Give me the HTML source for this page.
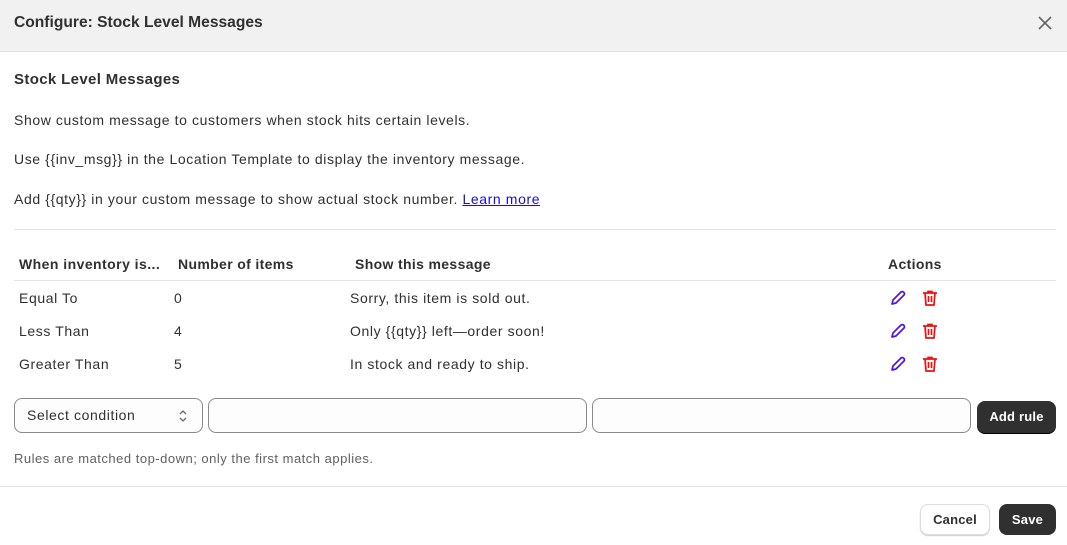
<!DOCTYPE html>
<html><head><style>
*{box-sizing:border-box;margin:0;padding:0}
body{width:1067px;height:545px;background:#fff;font-family:"Liberation Sans",sans-serif;color:#303030;position:relative;overflow:hidden;font-size:14px;letter-spacing:0.6px}
.hdr{position:absolute;left:0;top:0;width:1067px;height:52px;background:#f1f1f1;border-bottom:1px solid #e1e1e1}
.hdr h1{position:absolute;left:14px;top:14px;font-size:15.6px;font-weight:bold;color:#303030;letter-spacing:0}
.x{position:absolute;left:1037px;top:15px}
.t{position:absolute;white-space:nowrap}
.b{font-weight:bold;letter-spacing:0.35px}
.hr{position:absolute;height:1px;background:#e3e3e3}
a{color:#1a0dcc;text-decoration:underline}
.inp{position:absolute;top:398px;height:35px;border:1px solid #8a8a8a;border-radius:8px;background:#fdfdfd}
.btn{position:absolute;border-radius:8px;font-weight:bold;font-size:13px;text-align:center;letter-spacing:0.2px}
</style></head><body>
<div class="hdr"><h1>Configure: Stock Level Messages</h1>
<svg class="x" width="16" height="16" viewBox="0 0 16 16"><path d="M2 2L14 14M14 2L2 14" stroke="#666" stroke-width="1.6"/></svg></div>
<div class="t b" style="left:14px;top:71px;font-size:15px">Stock Level Messages</div>
<div class="t" style="left:14px;top:112px">Show custom message to customers when stock hits certain levels.</div>
<div class="t" style="left:14px;top:151px">Use {{inv_msg}} in the Location Template to display the inventory message.</div>
<div class="t" style="left:14px;top:191px">Add {{qty}} in your custom message to show actual stock number. <a>Learn more</a></div>
<div class="hr" style="left:14px;top:229px;width:1042px"></div>
<div class="t b" style="left:19px;top:256px;letter-spacing:0.45px">When inventory is...</div>
<div class="t b" style="left:178px;top:256px">Number of items</div>
<div class="t b" style="left:355px;top:256px">Show this message</div>
<div class="t b" style="left:888px;top:256px">Actions</div>
<div class="hr" style="left:14px;top:280px;width:1042px"></div>
<div class="t" style="left:19px;top:290px">Equal To</div><div class="t" style="left:174px;top:290px">0</div><div class="t" style="left:350px;top:290px">Sorry, this item is sold out.</div>
<div class="t" style="left:19px;top:323px">Less Than</div><div class="t" style="left:174px;top:323px">4</div><div class="t" style="left:350px;top:323px">Only {{qty}} left—order soon!</div>
<div class="t" style="left:19px;top:356px">Greater Than</div><div class="t" style="left:174px;top:356px">5</div><div class="t" style="left:350px;top:356px">In stock and ready to ship.</div>
<svg width="1067" height="545" style="position:absolute;left:0;top:0">
<defs>
<g id="pen"><path d="M3 15L4 11L12 3Q13.5 2 15 3.5Q16 5 15 6L7 14Z" fill="none" stroke="#4f13ee" stroke-width="1.7" stroke-linejoin="round"/></g>
<g id="bin"><path d="M2 4H16M7 4V2.5H11V4M4 4L5 16H13L14 4M7.5 7V13M10.5 7V13" fill="none" stroke="#ee1111" stroke-width="1.7"/></g>
</defs>
<use href="#pen" x="889" y="289"/><use href="#bin" x="921" y="289"/>
<use href="#pen" x="889" y="322"/><use href="#bin" x="921" y="322"/>
<use href="#pen" x="889" y="355"/><use href="#bin" x="921" y="355"/>
</svg>
<div class="inp" style="left:14px;width:189px"><span class="t" style="left:12px;top:8px">Select condition</span>
<svg style="position:absolute;left:162px;top:9px" width="12" height="16" viewBox="0 0 12 16"><path d="M3 6L6 3L9 6M3 10L6 13L9 10" fill="none" stroke="#666" stroke-width="1.3"/></svg></div>
<div class="inp" style="left:208px;width:379px"></div>
<div class="inp" style="left:592px;width:379px"></div>
<div class="btn" style="left:977px;top:401px;width:79px;height:32px;background:#303030;color:#fff;line-height:32px;box-shadow:0 1px 0 #000">Add rule</div>
<div class="t" style="left:14px;top:451px;font-size:13px;color:#616161;letter-spacing:0.5px">Rules are matched top-down; only the first match applies.</div>
<div class="hr" style="left:0;top:486px;width:1067px"></div>
<div class="btn" style="left:920px;top:504px;width:70px;height:31px;border:1px solid #ddd;background:#fff;line-height:29px;box-shadow:0 1px 1px #ccc">Cancel</div>
<div class="btn" style="left:999px;top:504px;width:57px;height:31px;background:#303030;color:#fff;line-height:31px">Save</div>
</body></html>
